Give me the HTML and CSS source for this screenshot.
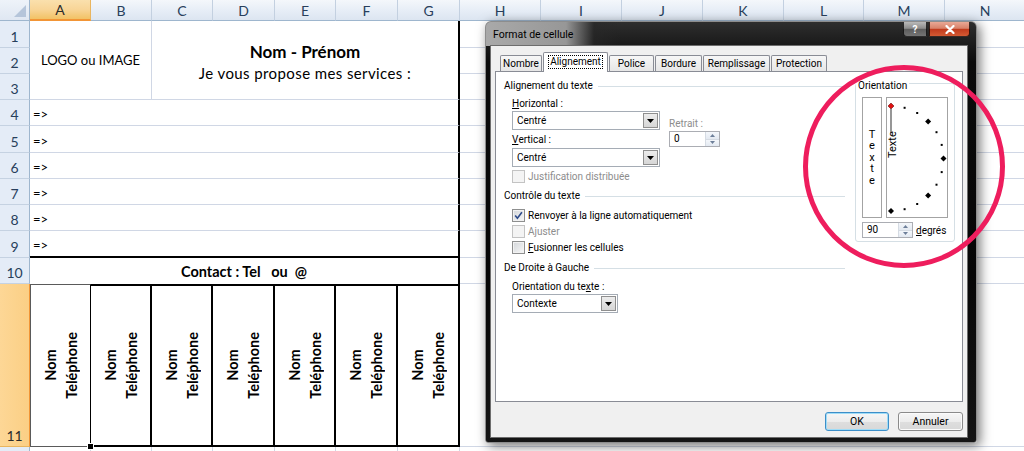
FILE: index.html
```html
<!DOCTYPE html>
<html lang="fr">
<head>
<meta charset="utf-8">
<title>Format de cellule</title>
<link rel="stylesheet" href="styles.css">
</head>
<body>
<div class="page">
  <div class="sheet">
    <div class="corner"><svg width="13" height="13" viewBox="0 0 13 13"><polygon points="12,0 12,12 0,12" fill="#b5c5da"/></svg></div>
    <div class="ch is-sel">A</div>
    <div class="ch">B</div>
    <div class="ch">C</div>
    <div class="ch">D</div>
    <div class="ch">E</div>
    <div class="ch">F</div>
    <div class="ch">G</div>
    <div class="ch">H</div>
    <div class="ch">I</div>
    <div class="ch">J</div>
    <div class="ch">K</div>
    <div class="ch">L</div>
    <div class="ch">M</div>
    <div class="ch">N</div>

    <div class="rh">1</div>
    <div class="cell logo">LOGO ou IMAGE</div>
    <div class="cell title">
      <div class="title-name">Nom - Prénom</div>
      <div class="title-sub">Je vous propose mes services :</div>
    </div>
    <div class="cell rest"></div>
    <div class="rh">2</div>
    <div class="cell rest"></div>
    <div class="rh">3</div>
    <div class="cell rest"></div>

    <div class="rh">4</div>
    <div class="cell line">=&gt;</div>
    <div class="cell rest"></div>
    <div class="rh">5</div>
    <div class="cell line">=&gt;</div>
    <div class="cell rest"></div>
    <div class="rh">6</div>
    <div class="cell line">=&gt;</div>
    <div class="cell rest"></div>
    <div class="rh">7</div>
    <div class="cell line">=&gt;</div>
    <div class="cell rest"></div>
    <div class="rh">8</div>
    <div class="cell line">=&gt;</div>
    <div class="cell rest"></div>
    <div class="rh">9</div>
    <div class="cell line is-last">=&gt;</div>
    <div class="cell rest"></div>

    <div class="rh">10</div>
    <div class="cell contact">Contact : Tel   ou  @</div>
    <div class="cell rest"></div>

    <div class="rh is-sel">11</div>
    <div class="cell card is-active"><div class="vtext">Nom<br>Teléphone</div><span class="fill-handle"></span></div>
    <div class="cell card"><div class="vtext">Nom<br>Teléphone</div></div>
    <div class="cell card"><div class="vtext">Nom<br>Teléphone</div></div>
    <div class="cell card"><div class="vtext">Nom<br>Teléphone</div></div>
    <div class="cell card"><div class="vtext">Nom<br>Teléphone</div></div>
    <div class="cell card"><div class="vtext">Nom<br>Teléphone</div></div>
    <div class="cell card"><div class="vtext">Nom<br>Teléphone</div></div>
    <div class="cell rest"></div>

    <div class="rh"></div>
    <div class="cell"></div>
    <div class="cell"></div>
    <div class="cell"></div>
    <div class="cell"></div>
    <div class="cell"></div>
    <div class="cell"></div>
    <div class="cell"></div>
    <div class="cell rest"></div>
  </div>

  <div class="dialog">
    <div class="dlg-titlebar">
      <span class="dlg-title">Format de cellule</span>
      <span class="cap-btn cap-help">?</span>
      <span class="cap-btn cap-close"><svg width="12" height="9" viewBox="0 0 12 9"><path d="M2.5 1 L9.5 8 M9.5 1 L2.5 8" stroke="#fff" stroke-width="2.2" stroke-linecap="round"/></svg></span>
    </div>
    <div class="dlg-client">
      <div class="tabs">
        <span class="tab tab-nombre">Nombre</span>
        <span class="tab tab-align is-current"><span class="focus">Alignement</span></span>
        <span class="tab tab-police">Police</span>
        <span class="tab tab-bordure">Bordure</span>
        <span class="tab tab-rempl">Remplissage</span>
        <span class="tab tab-protect">Protection</span>
      </div>
      <div class="tab-panel">
        <div class="col-main">
          <div class="group-title">Alignement du texte</div>
          <div class="align-grid">
            <div class="lbl c1"><u>H</u>orizontal :</div>
            <div class="select c1"><span class="select-val">Centré</span><span class="select-btn"><svg width="7" height="4" viewBox="0 0 7 4"><polygon points="0,0 7,0 3.5,4" fill="#000"/></svg></span></div>
            <div class="lbl c2 is-disabled retrait">Retrait :</div>
            <div class="lbl c1"><u>V</u>ertical :</div>
            <div class="spin c2"><span class="spin-val">0</span><span class="spin-btns"><span class="spin-arrow"><svg width="5" height="3" viewBox="0 0 5 3"><polygon points="0,3 5,3 2.5,0" fill="#6d7f99"/></svg></span><span class="spin-arrow"><svg width="5" height="3" viewBox="0 0 5 3"><polygon points="0,0 5,0 2.5,3" fill="#6d7f99"/></svg></span></span></div>
            <div class="select c1"><span class="select-val">Centré</span><span class="select-btn"><svg width="7" height="4" viewBox="0 0 7 4"><polygon points="0,0 7,0 3.5,4" fill="#000"/></svg></span></div>
          </div>
          <div class="check check-first is-disabled"><span class="box"></span>Justification distribuée</div>

          <div class="group-title group-next">Contrôle du texte</div>
          <div class="check-list">
            <div class="check"><span class="box"><svg width="11" height="11" viewBox="0 0 11 11"><path d="M2.2 5.6 L4.4 8.2 L8.9 2.2" fill="none" stroke="#2d4a8a" stroke-width="1.6"/></svg></span>Renvoyer à la ligne automatiquement</div>
            <div class="check is-disabled"><span class="box"></span>Ajuster</div>
            <div class="check"><span class="box"></span><span><u>F</u>usionner les cellules</span></div>
          </div>

          <div class="group-title group-next">De Droite à Gauche</div>
          <div class="lbl lbl-dir">Orientation du te<u>x</u>te :</div>
          <div class="select select-ctx"><span class="select-val">Contexte</span><span class="select-btn"><svg width="7" height="4" viewBox="0 0 7 4"><polygon points="0,0 7,0 3.5,4" fill="#000"/></svg></span></div>
        </div>

        <div class="orient">
          <div class="orient-label">Orientation</div>
          <div class="orient-row">
            <div class="orient-stack"><span class="stack-text">Texte</span></div>
            <div class="orient-dial">
              <svg width="60" height="119" viewBox="0 0 60 119">
                <line x1="4" y1="11" x2="4" y2="35" stroke="#6a6a6a" stroke-width="1.4"/>
                <text class="dial-text" transform="translate(8.6,60) rotate(-90)">Texte</text>
                <rect x="16.6" y="8.8" width="2" height="2" fill="#000"/>
                <rect x="29.2" y="14" width="2" height="2" fill="#000"/>
                <polygon points="41.1,20.4 44.1,23.4 41.1,26.4 38.1,23.4" fill="#000"/>
                <rect x="48.5" y="33.2" width="2" height="2" fill="#000"/>
                <rect x="53.7" y="45.9" width="2" height="2" fill="#000"/>
                <polygon points="56.5,57.5 59.5,60.5 56.5,63.5 53.5,60.5" fill="#000"/>
                <rect x="53.7" y="73.1" width="2" height="2" fill="#000"/>
                <rect x="48.5" y="85.7" width="2" height="2" fill="#000"/>
                <polygon points="41.1,94.6 44.1,97.6 41.1,100.6 38.1,97.6" fill="#000"/>
                <rect x="29.2" y="105" width="2" height="2" fill="#000"/>
                <rect x="16.6" y="110.2" width="2" height="2" fill="#000"/>
                <polygon points="4,110 7,113 4,116 1,113" fill="#000"/>
                <polygon points="4,5 7,8 4,11 1,8" fill="#e01010" stroke="#6a1010" stroke-width="0.6"/>
              </svg>
            </div>
          </div>
          <div class="orient-deg">
            <div class="spin spin-deg"><span class="spin-val">90</span><span class="spin-btns"><span class="spin-arrow"><svg width="5" height="3" viewBox="0 0 5 3"><polygon points="0,3 5,3 2.5,0" fill="#6d7f99"/></svg></span><span class="spin-arrow"><svg width="5" height="3" viewBox="0 0 5 3"><polygon points="0,0 5,0 2.5,3" fill="#6d7f99"/></svg></span></span></div>
            <span class="deg-lbl"><u>d</u>egrés</span>
          </div>
        </div>
      </div>
      <div class="dlg-buttons">
        <button class="btn btn-ok is-default">OK</button>
        <button class="btn btn-cancel">Annuler</button>
      </div>
    </div>
  </div>

  <svg class="mark" width="210" height="212" viewBox="0 0 210 212">
    <ellipse cx="104" cy="104.5" rx="98.5" ry="99" fill="none" stroke="#ee1d5d" stroke-width="5"/>
  </svg>
</div>
</body>
</html>
```

FILE: styles.css
```css
* { box-sizing: border-box; }
html, body { margin: 0; padding: 0; }
body {
  width: 1024px;
  height: 451px;
  overflow: hidden;
  background: #fff;
  font-family: Lato, "Liberation Sans", sans-serif;
}
.page {
  position: relative;
  width: 1024px;
  height: 451px;
  overflow: hidden;
}

/* ---------- spreadsheet ---------- */
.sheet {
  display: grid;
  grid-template-columns: 30px 61px 61px 61px 62px 61px 62px 62px 81px 81px 81px 81px 80px 81px 81px;
  grid-template-rows: 21px 27px 26px 26px 26px 27px 26px 26px 26px 27px 26px 163px 30px;
  font-size: 14.5px;
  color: #000;
}
.corner {
  display: flex;
  align-items: flex-end;
  justify-content: flex-end;
  padding: 0 2px 2px 0;
  background: linear-gradient(#eef3f9, #dfe7f2);
  border-right: 1px solid #9eb6ce;
  border-bottom: 1px solid #9eb6ce;
}
.ch {
  display: flex;
  align-items: center;
  justify-content: center;
  background: linear-gradient(#f4f7fb, #e6edf6 55%, #dce5f1);
  border-right: 1px solid #c3d0e0;
  border-bottom: 1px solid #9eb6ce;
  color: #283f5c;
  font-size: 14px;
}
.ch.is-sel {
  background: linear-gradient(#fae0ad, #f8d597 50%, #f2c265);
  border-bottom: 2px solid #f29536;
  border-right-color: #e9b55f;
  color: #2a2a2a;
}
.rh {
  display: flex;
  align-items: flex-end;
  justify-content: center;
  padding-bottom: 2px;
  background: #e4ecf7;
  border-right: 1px solid #9eb6ce;
  border-bottom: 1px solid #c5d2e2;
  color: #283f5c;
  font-size: 14px;
}
.rh.is-sel {
  background: linear-gradient(90deg, #fdd796, #fbcf85);
  border-right: 1px solid #f29536;
  border-bottom-color: #e9b55f;
  color: #2a2a2a;
}
.cell {
  min-width: 0;
  border-right: 1px solid #d0d7e5;
  border-bottom: 1px solid #d0d7e5;
}
.rest { grid-column: span 7; border-right: none; }
.logo {
  grid-column: span 2;
  grid-row: span 3;
  display: flex;
  align-items: center;
  justify-content: center;
  font-size: 13px;
}
.title {
  grid-column: span 5;
  grid-row: span 3;
  display: flex;
  flex-direction: column;
  align-items: center;
  justify-content: center;
  padding-top: 3px;
  border-right: 2px solid #000;
}
.title-name { font-weight: 700; font-size: 17px; line-height: 22px; }
.title-sub { font-size: 15px; letter-spacing: 0.4px; line-height: 20px; }
.line {
  grid-column: span 7;
  display: flex;
  align-items: flex-end;
  padding: 0 0 4px 3px;
  font-size: 13px;
  line-height: 14px;
  border-right: 2px solid #000;
}
.line.is-last { border-bottom: 2px solid #000; }
.contact {
  grid-column: span 7;
  display: flex;
  align-items: center;
  justify-content: center;
  font-weight: 700;
  white-space: pre;
  border-right: 2px solid #000;
  border-bottom: none;
}
.card {
  display: flex;
  align-items: center;
  justify-content: center;
  border-top: 2px solid #000;
  border-right: 2px solid #000;
  border-bottom: 2px solid #000;
}
.card.is-active {
  position: relative;
  border: 1px solid #5a5a5a;
  border-right-color: #000;
}
.vtext {
  writing-mode: vertical-rl;
  transform: rotate(180deg);
  font-weight: 700;
  font-size: 14.5px;
  line-height: 21px;
  text-align: center;
}
.fill-handle {
  position: absolute;
  right: -4px;
  bottom: -4px;
  width: 7px;
  height: 7px;
  background: #000;
  border: 1px solid #fff;
}

/* ---------- dialog ---------- */
.dialog {
  position: absolute;
  left: 485px;
  top: 21px;
  width: 492px;
  height: 422px;
  display: flex;
  flex-direction: column;
  padding: 0 8px 4px 4px;
  border: 1px solid #8d8d8d;
  border-radius: 6px 6px 3px 3px;
  background:
    linear-gradient(90deg, #a9a9a9 0, #979797 80px, rgba(40,40,40,0.6) 108px, rgba(0,0,0,0) 135px) 0 0 / 100% 24px no-repeat,
    linear-gradient(180deg, #2e2e2e 0, #0b0b0b 40px, #050505 60%, #151515 100%);
  box-shadow: 3px 3px 12px rgba(0, 0, 0, 0.55);
  font-family: Roboto, "Liberation Sans", sans-serif;
  font-size: 10px;
  color: #000;
}
.dlg-titlebar {
  height: 23px;
  display: flex;
  align-items: flex-start;
  padding-left: 3px;
}
.dlg-title {
  padding-top: 6px;
  line-height: 14px;
  font-size: 10.5px;
  color: #000;
}
.cap-btn {
  height: 15px;
  display: flex;
  align-items: center;
  justify-content: center;
  border: 1px solid rgba(0, 0, 0, 0.75);
  border-top: none;
  color: #fff;
  font-weight: 700;
  font-size: 10px;
}
.cap-help {
  width: 24px;
  margin-left: auto;
  border-radius: 0 0 0 4px;
  background: linear-gradient(#b9b9b9, #8d8d8d 45%, #5d5d5d 52%, #747474);
}
.cap-close {
  width: 41px;
  margin-left: 2px;
  margin-right: -2px;
  border-radius: 0 0 4px 0;
  background: linear-gradient(#e9a895, #d8826a 45%, #c13b1d 52%, #d45a33);
}
.dlg-client {
  flex: 1;
  display: flex;
  flex-direction: column;
  padding: 6px 4px 0 4px;
  background: #f0f0f0;
  border: 1px solid #6d6d6d;
}
.tabs {
  display: flex;
  align-items: flex-end;
  gap: 1px;
  height: 20px;
  margin-bottom: -1px;
  padding-left: 5px;
}
.tab {
  height: 16px;
  margin-bottom: 1px;
  display: flex;
  align-items: center;
  justify-content: center;
  border: 1px solid #898c95;
  border-bottom: none;
  border-radius: 2px 2px 0 0;
  background: linear-gradient(#f7f7f7, #e6e6e6);
  white-space: nowrap;
}
.tab.is-current {
  position: relative;
  z-index: 1;
  height: 20px;
  margin-bottom: 0;
  padding-bottom: 2px;
  background: #fff;
}
.tab-nombre { width: 42px; }
.tab-align { width: 65px; }
.tab-police { width: 45px; }
.tab-bordure { width: 47px; }
.tab-rempl { width: 67px; }
.tab-protect { width: 56px; }
.focus {
  border: 1px dotted #000;
  padding: 0 1px;
  line-height: 12px;
}
.tab-panel {
  height: 331px;
  display: flex;
  gap: 10px;
  padding: 7px 7px 0 8px;
  background: #fff;
  border: 1px solid #898c95;
}
.col-main {
  width: 341px;
  display: flex;
  flex-direction: column;
  align-items: flex-start;
}
.group-title {
  align-self: stretch;
  display: flex;
  align-items: center;
  height: 14px;
  line-height: 14px;
  white-space: nowrap;
}
.group-title::after {
  content: "";
  flex: 1;
  margin-left: 5px;
  border-top: 1px solid #d5dfe5;
}
.group-next { margin-top: 6px; }
.align-grid {
  display: grid;
  grid-template-columns: 148px 51px;
  grid-template-rows: 14px 19px 16px 19px;
  column-gap: 9px;
  row-gap: 1px;
  margin: 3px 0 0 8px;
}
.c1 { grid-column: 1; }
.c2 { grid-column: 2; }
.lbl {
  display: flex;
  align-items: center;
  white-space: nowrap;
}
.retrait { align-items: flex-end; padding-bottom: 1px; }
.is-disabled { color: #8d8d8d; }
.select {
  display: flex;
  align-items: center;
  height: 19px;
  padding: 1px;
  background: #fff;
  border: 1px solid #a5acb5;
}
.select-val { flex: 1; padding-left: 3px; }
.select-btn {
  width: 15px;
  height: 15px;
  display: flex;
  align-items: center;
  justify-content: center;
  background: linear-gradient(#ececec, #d6d6d6);
  border: 1px solid #8f8f8f;
}
.select-ctx { width: 106px; margin: 1px 0 0 8px; }
.spin {
  display: flex;
  width: 51px;
  height: 16px;
  background: #fff;
  border: 1px solid #abadb3;
}
.spin-val { flex: 1; padding-left: 4px; line-height: 14px; }
.spin-btns {
  width: 14px;
  display: flex;
  flex-direction: column;
  border-left: 1px solid #d5dbe3;
}
.spin-arrow {
  flex: 1;
  display: flex;
  align-items: center;
  justify-content: center;
  background: linear-gradient(#f4f7fb, #e3e9f1);
}
.spin-arrow + .spin-arrow { border-top: 1px solid #d5dbe3; }
.check {
  display: flex;
  align-items: center;
  gap: 3px;
  height: 16px;
  margin-left: 8px;
  white-space: nowrap;
}
.check-first { height: 13px; margin-top: 3px; }
.check-list { margin-top: 4px; }
.box {
  width: 13px;
  height: 13px;
  flex: none;
  display: flex;
  align-items: center;
  justify-content: center;
  border: 1px solid #8e8f8f;
  background: linear-gradient(135deg, #d3d6da, #f7f7f7);
  box-shadow: inset 0 0 0 1px #f2f2f2;
}
.check.is-disabled .box {
  border-color: #c3c3c3;
  background: #f4f4f4;
  box-shadow: none;
}
.lbl-dir { margin: 4px 0 0 8px; height: 14px; }

/* orientation */
.orient {
  width: 100px;
  align-self: flex-start;
  margin-top: 4px;
  padding: 0 0 3px 6px;
  border: 1px solid #d5dfe5;
  border-radius: 3px;
}
.orient-label {
  width: fit-content;
  margin: -5px 0 0 -6px;
  padding: 0 2px;
  line-height: 14px;
  background: #fff;
}
.orient-row {
  display: flex;
  gap: 4px;
  margin-top: 4px;
}
.orient-stack {
  width: 20px;
  height: 121px;
  display: flex;
  align-items: center;
  justify-content: center;
  border: 1px solid #a3a3a3;
  font-size: 11px;
}
.stack-text {
  width: 8px;
  word-break: break-all;
  text-align: center;
  line-height: 11.6px;
}
.orient-dial {
  width: 62px;
  height: 121px;
  border: 1px solid #a3a3a3;
}
.orient-dial svg { display: block; }
.dial-text {
  font-family: Roboto, "Liberation Sans", sans-serif;
  font-size: 11px;
  fill: #000;
}
.orient-deg {
  display: flex;
  align-items: center;
  margin-top: 4px;
}
.deg-lbl { margin-left: 3px; }

/* buttons */
.dlg-buttons {
  display: flex;
  justify-content: flex-end;
  gap: 9px;
  margin-top: 10px;
}
.btn {
  height: 19px;
  padding: 0;
  font-family: Roboto, "Liberation Sans", sans-serif;
  font-size: 10.5px;
  color: #000;
  border: 1px solid #8a8a8a;
  border-radius: 3px;
  background: linear-gradient(#f6f6f6, #ececec 50%, #dedede 51%, #d8d8d8);
  box-shadow: inset 0 0 0 1px #fbfbfb;
}
.btn-ok { width: 64px; }
.btn-cancel { width: 65px; }
.btn.is-default {
  border-color: #3c8ec8;
  box-shadow: inset 0 0 0 1px #9fdcf7;
}

/* highlight mark */
.mark {
  position: absolute;
  left: 800px;
  top: 62px;
}
```
